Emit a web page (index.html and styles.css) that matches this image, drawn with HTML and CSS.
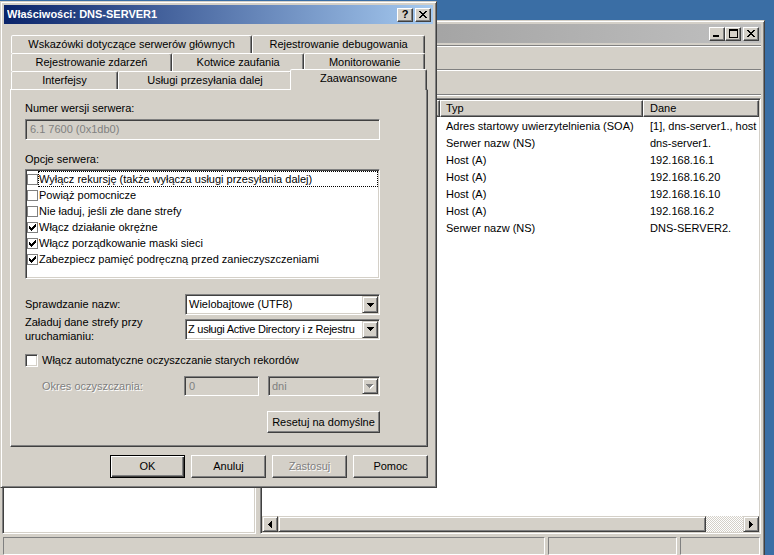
FILE: index.html
```html
<!DOCTYPE html>
<html lang="pl">
<head>
<meta charset="utf-8">
<title>Właściwości: DNS-SERVER1</title>
<link rel="stylesheet" href="styles.css">
</head>
<body>
<div class="desktop">

  <div class="window mainwin">
    <div class="caption inactive">
      <span class="cap-title"></span>
      <div class="cap-btns">
        <span class="cap-btn"><svg width="8" height="7" viewBox="0 0 8 7" shape-rendering="crispEdges"><path d="M0 5h6v2h-6z" fill="#000"/></svg></span>
        <span class="cap-btn"><svg width="9" height="9" viewBox="0 0 9 9" shape-rendering="crispEdges"><path d="M0 0h9v2h-9z M0 2h1v7h-1z M8 2h1v7h-1z M0 8h9v1h-9z" fill="#000"/></svg></span>
        <span class="cap-btn sep"><svg width="8" height="7" viewBox="0 0 8 7" shape-rendering="crispEdges"><path d="M0 0h2v1h-2z M6 0h2v1h-2z M1 1h2v1h-2z M5 1h2v1h-2z M2 2h4v1h-4z M3 3h2v1h-2z M2 4h4v1h-4z M1 5h2v1h-2z M5 5h2v1h-2z M0 6h2v1h-2z M6 6h2v1h-2z" fill="#000"/></svg></span>
      </div>
    </div>
    <div class="rebar">
      <div class="band menu"></div>
      <div class="band tools"></div>
      <div class="rebar-sep"></div>
    </div>
    <div class="client">
      <div class="tree sunken"></div>
      <div class="listpane sunken">
        <div class="lv-head">
          <div class="hcell h1"></div>
          <div class="hcell h2">Typ</div>
          <div class="hcell h3">Dane</div>
        </div>
        <div class="lv-body">
          <div class="lv-row"><span class="r1"></span><span class="r2">Adres startowy uwierzytelnienia (SOA)</span><span class="r3">[1], dns-server1., host</span></div>
          <div class="lv-row"><span class="r1"></span><span class="r2">Serwer nazw (NS)</span><span class="r3">dns-server1.</span></div>
          <div class="lv-row"><span class="r1"></span><span class="r2">Host (A)</span><span class="r3">192.168.16.1</span></div>
          <div class="lv-row"><span class="r1"></span><span class="r2">Host (A)</span><span class="r3">192.168.16.20</span></div>
          <div class="lv-row"><span class="r1"></span><span class="r2">Host (A)</span><span class="r3">192.168.16.10</span></div>
          <div class="lv-row"><span class="r1"></span><span class="r2">Host (A)</span><span class="r3">192.168.16.2</span></div>
          <div class="lv-row"><span class="r1"></span><span class="r2">Serwer nazw (NS)</span><span class="r3">DNS-SERVER2.</span></div>
        </div>
        <div class="hscroll">
          <span class="sb-btn"><svg width="4" height="7" viewBox="0 0 4 7" shape-rendering="crispEdges"><path d="M0 3h1v-1h1v-1h1v-1h1v7h-1v-1h-1v-1h-1v-1h-1z" fill="#000"/></svg></span>
          <span class="sb-thumb"></span>
          <span class="sb-track"></span>
          <span class="sb-btn"><svg width="4" height="7" viewBox="0 0 4 7" shape-rendering="crispEdges"><path d="M0 0h1v1h1v1h1v1h1v1h-1v1h-1v1h-1v1h-1z" fill="#000"/></svg></span>
        </div>
      </div>
    </div>
    <div class="statusbar">
      <span class="sbp grow"></span>
      <span class="sbp mid"></span>
      <span class="sbp end"></span>
    </div>
  </div>

  <div class="window dialog">
    <div class="caption active">
      <span class="cap-title">Właściwości: DNS-SERVER1</span>
      <div class="cap-btns">
        <span class="cap-btn"><span class="q">?</span></span>
        <span class="cap-btn sep"><svg width="8" height="7" viewBox="0 0 8 7" shape-rendering="crispEdges"><path d="M0 0h2v1h-2z M6 0h2v1h-2z M1 1h2v1h-2z M5 1h2v1h-2z M2 2h4v1h-4z M3 3h2v1h-2z M2 4h4v1h-4z M1 5h2v1h-2z M5 5h2v1h-2z M0 6h2v1h-2z M6 6h2v1h-2z" fill="#000"/></svg></span>
      </div>
    </div>
    <div class="dlg-body">
      <div class="tabs">
        <div class="tabrow">
          <span class="tab">Wskazówki dotyczące serwerów głównych</span>
          <span class="tab">Rejestrowanie debugowania</span>
        </div>
        <div class="tabrow">
          <span class="tab">Rejestrowanie zdarzeń</span>
          <span class="tab">Kotwice zaufania</span>
          <span class="tab">Monitorowanie</span>
        </div>
        <div class="tabrow">
          <span class="tab t-if">Interfejsy</span>
          <span class="tab t-fw">Usługi przesyłania dalej</span>
          <span class="tab sel">Zaawansowane</span>
        </div>
      </div>
      <div class="tabpanel">
        <div class="lbl">Numer wersji serwera:</div>
        <div class="field ro">6.1 7600 (0x1db0)</div>
        <div class="lbl opts">Opcje serwera:</div>
        <div class="listbox">
          <div class="li focus"><span class="cb"></span><span class="li-text">Wyłącz rekursję (także wyłącza usługi przesyłania dalej)</span></div>
          <div class="li"><span class="cb"></span><span class="li-text">Powiąż pomocnicze</span></div>
          <div class="li"><span class="cb"></span><span class="li-text">Nie ładuj, jeśli złe dane strefy</span></div>
          <div class="li"><span class="cb"><svg width="7" height="7" viewBox="0 0 7 7" shape-rendering="crispEdges"><path d="M6 0h1v1h-1z M5 1h2v1h-2z M0 2h1v1h-1z M4 2h3v1h-3z M0 3h2v1h-2z M3 3h3v1h-3z M0 4h5v1h-5z M1 5h3v1h-3z M2 6h1v1h-1z" fill="#000"/></svg></span><span class="li-text">Włącz działanie okrężne</span></div>
          <div class="li"><span class="cb"><svg width="7" height="7" viewBox="0 0 7 7" shape-rendering="crispEdges"><path d="M6 0h1v1h-1z M5 1h2v1h-2z M0 2h1v1h-1z M4 2h3v1h-3z M0 3h2v1h-2z M3 3h3v1h-3z M0 4h5v1h-5z M1 5h3v1h-3z M2 6h1v1h-1z" fill="#000"/></svg></span><span class="li-text">Włącz porządkowanie maski sieci</span></div>
          <div class="li"><span class="cb"><svg width="7" height="7" viewBox="0 0 7 7" shape-rendering="crispEdges"><path d="M6 0h1v1h-1z M5 1h2v1h-2z M0 2h1v1h-1z M4 2h3v1h-3z M0 3h2v1h-2z M3 3h3v1h-3z M0 4h5v1h-5z M1 5h3v1h-3z M2 6h1v1h-1z" fill="#000"/></svg></span><span class="li-text">Zabezpiecz pamięć podręczną przed zanieczyszczeniami</span></div>
        </div>
        <div class="formgrid">
          <div class="lbl">Sprawdzanie nazw:</div>
          <div class="combo"><span class="combo-text">Wielobajtowe (UTF8)</span><span class="dd"><svg width="7" height="4" viewBox="0 0 7 4" shape-rendering="crispEdges"><path d="M0 0h7v1h-1v1h-1v1h-1v1h-1v-1h-1v-1h-1v-1h-1z" fill="#000"/></svg></span></div>
          <div class="lbl lbl2">Załaduj dane strefy przy uruchamianiu:</div>
          <div class="combo"><span class="combo-text tight">Z usługi Active Directory i z Rejestru</span><span class="dd"><svg width="7" height="4" viewBox="0 0 7 4" shape-rendering="crispEdges"><path d="M0 0h7v1h-1v1h-1v1h-1v1h-1v-1h-1v-1h-1v-1h-1z" fill="#000"/></svg></span></div>
        </div>
        <div class="chkrow"><span class="cb3d"></span><span>Włącz automatyczne oczyszczanie starych rekordów</span></div>
        <div class="scav">
          <span class="scav-lbl">Okres oczyszczania:</span>
          <div class="field num">0</div>
          <div class="combo dis small"><span class="combo-text">dni</span><span class="dd"><svg width="8" height="5" viewBox="0 0 8 5" shape-rendering="crispEdges"><path d="M1 1h7v1h-1v1h-1v1h-1v1h-1v-1h-1v-1h-1v-1h-1z" fill="#fff"/><path d="M0 0h7v1h-1v1h-1v1h-1v1h-1v-1h-1v-1h-1v-1h-1z" fill="#808080"/></svg></span></div>
        </div>
        <div class="reset-row"><button class="btn reset">Resetuj na domyślne</button></div>
      </div>
      <div class="dlg-btns">
        <button class="btn default">OK</button>
        <button class="btn">Anuluj</button>
        <button class="btn disabled">Zastosuj</button>
        <button class="btn">Pomoc</button>
      </div>
    </div>
  </div>

</div>
</body>
</html>
```
FILE: styles.css
```css
* { box-sizing: border-box; }
html, body { margin: 0; padding: 0; }
body {
  font-family: "Liberation Sans", Arial, sans-serif;
  font-size: 11px;
  line-height: 13px;
  color: #000;
  background: #3a6ea5;
}
.desktop {
  position: relative;
  width: 774px;
  height: 555px;
  overflow: hidden;
  background: #3a6ea5;
}

/* generic window frame */
.window {
  position: absolute;
  display: flex;
  flex-direction: column;
  background: #d4d0c8;
  border: 1px solid;
  border-color: #d4d0c8 #404040 #404040 #d4d0c8;
  box-shadow: inset 1px 1px #fff, inset -1px -1px #808080;
  padding: 3px;
}
.mainwin { left: -2px; top: 20px; width: 767px; height: 540px; }
.dialog { left: 0; top: 1px; width: 437px; height: 487px; }

.caption {
  flex: none;
  height: 19px;
  margin-bottom: 1px;
  display: flex;
  align-items: center;
  padding: 0 2px 0 3px;
}
.caption.active {
  background: linear-gradient(to right, #0a246a, #a6caf0);
  color: #fff;
  font-weight: bold;
}
.caption.inactive { background: linear-gradient(to right, #808080, #c0c0c0); }
.cap-title { flex: 1; white-space: nowrap; overflow: hidden; }
.cap-btns { display: flex; }
.cap-btn {
  width: 16px;
  height: 14px;
  display: flex;
  align-items: center;
  justify-content: center;
  background: #d4d0c8;
  border: 1px solid;
  border-color: #fff #404040 #404040 #fff;
  box-shadow: inset -1px -1px #808080;
  color: #000;
}
.cap-btn.sep { margin-left: 2px; }
.cap-btn .q { font-weight: bold; font-size: 11px; line-height: 11px; }

/* raised / sunken helpers */
.sunken {
  border: 1px solid;
  border-color: #808080 #fff #fff #808080;
  box-shadow: inset 1px 1px #404040, inset -1px -1px #d4d0c8;
  padding: 1px;
}

/* main window parts */
.rebar { flex: none; height: 54px; padding-top: 1px; display: flex; flex-direction: column; }
.band { border-top: 1px solid #808080; box-shadow: inset 0 1px #fff; }
.band.menu { height: 24px; }
.band.tools { height: 25px; }
.rebar-sep { height: 2px; border-top: 1px solid #808080; border-bottom: 1px solid #fff; }

.client { flex: none; height: 436px; display: flex; gap: 4px; }
.tree { width: 254px; flex: none; background: #fff; }
.listpane { flex: 1; min-width: 0; background: #fff; display: flex; flex-direction: column; overflow: hidden; }

.lv-head { flex: none; display: flex; height: 17px; background: #d4d0c8; }
.hcell {
  height: 17px;
  border: 1px solid;
  border-color: #fff #404040 #404040 #fff;
  box-shadow: inset -1px -1px #808080;
  padding-left: 5px;
  line-height: 15px;
  white-space: nowrap;
  overflow: hidden;
}
.h1 { width: 178px; flex: none; }
.h2 { width: 203px; flex: none; }
.h3 { flex: 1; padding-left: 6px; }

.lv-body { flex: 1; padding-top: 1px; overflow: hidden; }
.lv-row { display: flex; height: 17px; line-height: 17px; white-space: nowrap; }
.r1 { width: 178px; flex: none; }
.r2 { width: 203px; flex: none; padding-left: 6px; overflow: hidden; }
.r3 { flex: 1; min-width: 0; padding-left: 7px; overflow: hidden; }

.hscroll { flex: none; display: flex; height: 16px; }
.sb-btn, .sb-thumb {
  height: 16px;
  flex: none;
  background: #d4d0c8;
  border: 1px solid;
  border-color: #d4d0c8 #404040 #404040 #d4d0c8;
  box-shadow: inset 1px 1px #fff, inset -1px -1px #808080;
}
.sb-btn { width: 16px; display: flex; align-items: center; justify-content: center; }
.sb-thumb { width: 428px; }
.sb-track {
  flex: 1;
  background: repeating-conic-gradient(#fff 0 25%, #d4d0c8 0 50%) 0 0 / 2px 2px;
}

.statusbar { flex: none; height: 20px; margin-top: 2px; display: flex; gap: 3px; padding: 1px 1px 0 1px; }
.sbp { height: 18px; border: 1px solid; border-color: #808080 #fff #fff #808080; }
.sbp.grow { flex: 1; }
.sbp.mid { width: 129px; flex: none; }
.sbp.end { width: 80px; flex: none; }

/* dialog */
.dlg-body { flex: 1; display: flex; flex-direction: column; padding: 10px 5px 0 6px; }
.tabs { display: flex; flex-direction: column; }
.tabrow { display: flex; height: 18px; padding: 0 3px 0 1px; }
.tab {
  flex: 1 1 auto;
  height: 18px;
  text-align: center;
  white-space: nowrap;
  line-height: 17px;
  border: 1px solid;
  border-bottom: 0;
  border-color: #fff #404040 transparent #fff;
  border-radius: 2px 2px 0 0;
  box-shadow: inset -1px 0 #808080;
  background: #d4d0c8;
}
.tab.t-if { flex: none; width: 107px; }
.tab.t-fw { flex: none; width: 174px; }
.tab.sel {
  position: relative;
  z-index: 1;
  height: 21px;
  margin: -2px -2px -1px -2px;
}
.tabpanel {
  height: 358px;
  border: 1px solid;
  border-color: #fff #404040 #404040 #fff;
  box-shadow: inset -1px -1px #808080;
  padding: 12px 47px 0 14px;
}

.lbl { line-height: 13px; }
.lbl2 { line-height: 14px; }
.opts { margin-top: 13px; }

.field {
  height: 21px;
  border: 1px solid;
  border-color: #808080 #fff #fff #808080;
  box-shadow: inset 1px 1px #404040, inset -1px -1px #d4d0c8;
  padding: 1px 4px;
  line-height: 17px;
  white-space: nowrap;
  overflow: hidden;
}
.field.ro { margin-top: 4px; background: #d4d0c8; color: #808080; }
.field.num { width: 75px; height: 20px; line-height: 16px; background: #d4d0c8; color: #808080; flex: none; }

.listbox {
  margin-top: 3px;
  height: 110px;
  background: #fff;
  border: 1px solid;
  border-color: #808080 #fff #fff #808080;
  box-shadow: inset 1px 1px #404040, inset -1px -1px #d4d0c8;
  padding: 1px;
}
.li { display: flex; align-items: center; height: 16px; }
.cb {
  width: 11px;
  height: 11px;
  flex: none;
  border: 1px solid #808080;
  background: #fff;
  display: flex;
  align-items: center;
  justify-content: center;
}
.li-text {
  flex: 1;
  height: 16px;
  line-height: 14px;
  border: 1px solid transparent;
  white-space: nowrap;
}
.li.focus .li-text { border: 1px dotted #000; }

.formgrid {
  margin-top: 15px;
  display: grid;
  grid-template-columns: 160px 195px;
  grid-template-rows: 21px 28px;
  align-items: center;
}
.combo {
  height: 21px;
  display: flex;
  background: #fff;
  border: 1px solid;
  border-color: #808080 #fff #fff #808080;
  box-shadow: inset 1px 1px #404040, inset -1px -1px #d4d0c8;
  padding: 1px;
}
.combo-text { flex: 1; min-width: 0; padding-left: 2px; line-height: 17px; white-space: nowrap; overflow: hidden; }
.combo-text.tight { padding-left: 1px; letter-spacing: -0.25px; }
.dd {
  flex: none;
  width: 16px;
  display: flex;
  align-items: center;
  justify-content: center;
  background: #d4d0c8;
  border: 1px solid;
  border-color: #d4d0c8 #404040 #404040 #d4d0c8;
  box-shadow: inset 1px 1px #fff, inset -1px -1px #808080;
}
.combo.dis { background: #d4d0c8; color: #808080; }
.combo.small { width: 112px; height: 20px; margin-left: 9px; flex: none; }
.combo.small .combo-text { line-height: 16px; }

.chkrow { margin-top: 11px; display: flex; align-items: center; height: 13px; gap: 4px; white-space: nowrap; }
.cb3d {
  width: 13px;
  height: 13px;
  flex: none;
  background: #fff;
  border: 1px solid;
  border-color: #808080 #fff #fff #808080;
  box-shadow: inset 1px 1px #404040, inset -1px -1px #d4d0c8;
}

.scav { margin-top: 9px; display: flex; align-items: center; height: 20px; }
.scav-lbl { width: 159px; flex: none; padding-left: 17px; color: #808080; text-shadow: 1px 1px #fff; white-space: nowrap; }

.reset-row { margin-top: 15px; display: flex; justify-content: flex-end; }

.btn {
  width: 75px;
  height: 23px;
  padding: 0;
  font: inherit;
  line-height: 13px;
  color: #000;
  background: #d4d0c8;
  border: 1px solid;
  border-color: #fff #404040 #404040 #fff;
  box-shadow: inset -1px -1px #808080;
  display: flex;
  align-items: center;
  justify-content: center;
  white-space: nowrap;
}
.btn.reset { width: 113px; height: 22px; }
.btn.default {
  border-color: #000;
  box-shadow: inset 1px 1px #fff, inset -1px -1px #404040, inset -2px -2px #808080;
}
.btn.disabled { color: #808080; text-shadow: 1px 1px #fff; }
.dlg-btns { margin-top: 8px; display: flex; justify-content: flex-end; gap: 6px; }
```
